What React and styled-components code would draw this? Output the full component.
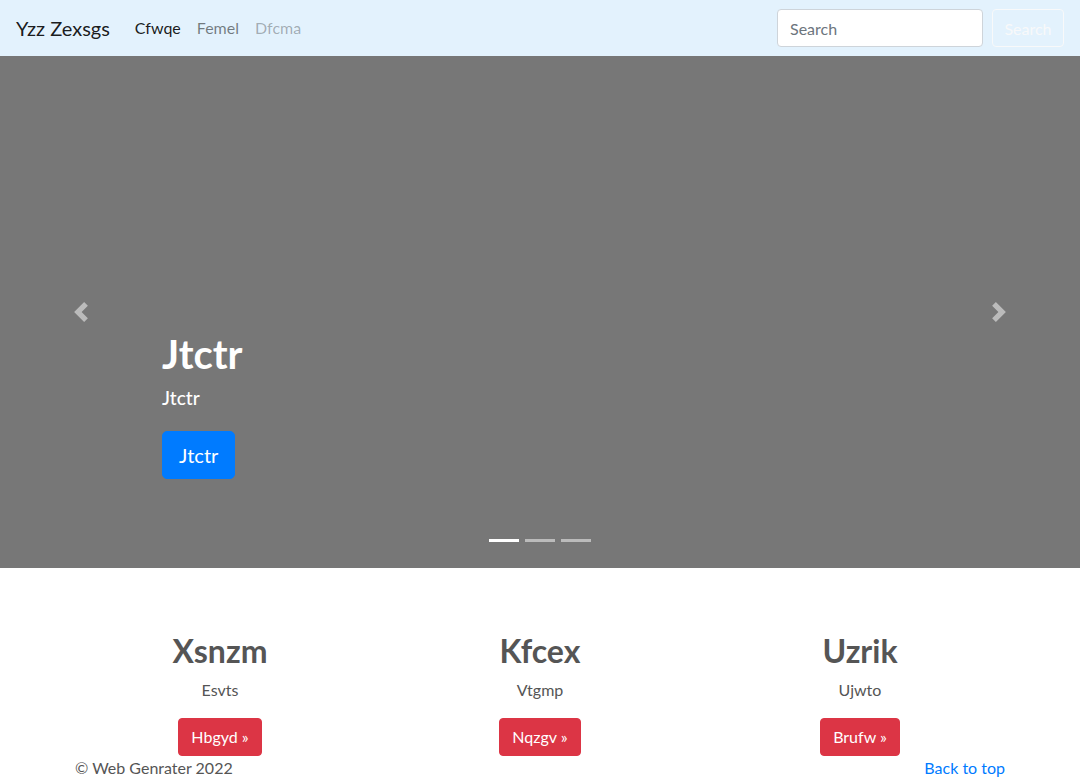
import React from 'react';
import styled, { createGlobalStyle } from 'styled-components';

const font = `"Lato", "Noto Sans", "Liberation Sans", sans-serif`;

const GlobalStyle = createGlobalStyle`
  * { box-sizing: border-box; }
  body {
    margin: 0;
    font-family: ${font};
    font-size: 16px;
    line-height: 1.5;
    color: #212529;
    background: #fff;
  }
`;

const Navbar = styled.nav`
  height: 56px;
  display: flex;
  align-items: center;
  padding: 8px 16px;
  background: #e3f2fd;
`;

const Brand = styled.a`
  font-size: 20px;
  line-height: 30px;
  color: rgba(0, 0, 0, 0.9);
  margin-right: 17px;
  text-decoration: none;
`;

const NavList = styled.ul`
  display: flex;
  list-style: none;
  margin: 0;
  padding: 0;
  flex: 1;
`;

const NavLink = styled.a`
  display: block;
  padding: 8px;
  text-decoration: none;
  color: ${p => (p.$active ? 'rgba(0,0,0,0.9)' : p.$disabled ? 'rgba(0,0,0,0.3)' : 'rgba(0,0,0,0.5)')};
`;

const SearchForm = styled.form`
  display: flex;
  align-items: center;
  gap: 9px;
`;

const SearchInput = styled.input`
  width: 206px;
  height: 38px;
  padding: 6px 12px;
  font-family: ${font};
  font-size: 16px;
  color: #495057;
  border: 1px solid #ced4da;
  border-radius: 4px;
  background: #fff;
  &::placeholder { color: #6c757d; }
`;

const OutlineButton = styled.button`
  width: 72px;
  height: 38px;
  font-family: ${font};
  font-size: 16px;
  color: #f8f9fa;
  background: transparent;
  border: 1px solid #f8f9fa;
  border-radius: 4px;
`;

const Carousel = styled.div`
  position: relative;
  height: 512px;
  background: #777;
  margin-bottom: 64px;
`;

const Control = styled.a`
  position: absolute;
  top: 0;
  bottom: 0;
  ${p => (p.$side === 'prev' ? 'left: 0;' : 'right: 0;')}
  width: 15%;
  display: flex;
  align-items: center;
  justify-content: center;
  opacity: 0.5;
`;

const Caption = styled.div`
  position: absolute;
  left: 15%;
  right: 15%;
  bottom: 89px;
  color: #fff;
`;

const CaptionTitle = styled.h1`
  margin: 0 0 5px;
  font-size: 40px;
  line-height: 48px;
  font-weight: 700;
`;

const CaptionText = styled.p`
  margin: 0 0 18px;
  font-size: 19px;
  line-height: 30px;
  font-weight: 500;
`;

const BigButton = styled.a`
  display: inline-block;
  padding: 8px 16px;
  font-size: 20px;
  line-height: 30px;
  color: #fff;
  background: #007bff;
  border: 1px solid #007bff;
  border-radius: 5px;
  text-decoration: none;
  vertical-align: top;
`;

const Indicators = styled.ol`
  position: absolute;
  left: 0;
  right: 0;
  bottom: 26px;
  display: flex;
  justify-content: center;
  gap: 6px;
  list-style: none;
  margin: 0;
  padding: 0;
`;

const Indicator = styled.li`
  width: 30px;
  height: 3px;
  background: #fff;
  opacity: ${p => (p.$active ? 1 : 0.5)};
`;

const Container = styled.div`
  width: 960px;
  margin: 0 auto;
  padding: 0 15px;
`;

const Row = styled.div`
  display: grid;
  grid-template-columns: repeat(3, 1fr);
  margin: 0 -15px;
`;

const Col = styled.div`
  padding: 0 15px;
  text-align: center;
`;

const ColTitle = styled.h2`
  margin: 0 0 8px;
  font-size: 32px;
  line-height: 38px;
  font-weight: 700;
  color: #555;
`;

const ColText = styled.p`
  margin: 0 0 16px;
  color: #555;
`;

const DangerButton = styled.a`
  display: inline-block;
  padding: 6px 12px;
  line-height: 24px;
  color: #fff;
  background: #dc3545;
  border: 1px solid #dc3545;
  border-radius: 4px;
  text-decoration: none;
`;

const Footer = styled.footer`
  display: flex;
  justify-content: space-between;
  padding: 0 0 16px;
  color: #555;
`;

const TopLink = styled.a`
  color: #007bff;
  text-decoration: none;
`;

const Chevron = ({ dir }) => (
  <svg width="20" height="20" viewBox="0 0 8 8" fill="#fff">
    {dir === 'prev' ? (
      <path d="M5.25 0l-4 4 4 4 1.5-1.5L4.25 4l2.5-2.5L5.25 0z" />
    ) : (
      <path d="M2.75 0l-1.5 1.5L3.75 4l-2.5 2.5L2.75 8l4-4-4-4z" />
    )}
  </svg>
);

const features = [
  { title: 'Xsnzm', text: 'Esvts', btn: 'Hbgyd' },
  { title: 'Kfcex', text: 'Vtgmp', btn: 'Nqzgv' },
  { title: 'Uzrik', text: 'Ujwto', btn: 'Brufw' },
];

export default function App() {
  return (
    <>
      <GlobalStyle />
      <Navbar>
        <Brand href="#">Yzz Zexsgs</Brand>
        <NavList>
          <li><NavLink href="#" $active>Cfwqe</NavLink></li>
          <li><NavLink href="#">Femel</NavLink></li>
          <li><NavLink href="#" $disabled>Dfcma</NavLink></li>
        </NavList>
        <SearchForm onSubmit={e => e.preventDefault()}>
          <SearchInput placeholder="Search" />
          <OutlineButton type="submit">Search</OutlineButton>
        </SearchForm>
      </Navbar>

      <Carousel>
        <Indicators>
          <Indicator $active />
          <Indicator />
          <Indicator />
        </Indicators>
        <Caption>
          <CaptionTitle>Jtctr</CaptionTitle>
          <CaptionText>Jtctr</CaptionText>
          <BigButton href="#">Jtctr</BigButton>
        </Caption>
        <Control $side="prev" href="#"><Chevron dir="prev" /></Control>
        <Control $side="next" href="#"><Chevron dir="next" /></Control>
      </Carousel>

      <Container>
        <Row>
          {features.map(f => (
            <Col key={f.title}>
              <ColTitle>{f.title}</ColTitle>
              <ColText>{f.text}</ColText>
              <DangerButton href="#">{f.btn} &raquo;</DangerButton>
            </Col>
          ))}
        </Row>
        <Footer>
          <span>&copy; Web Genrater 2022</span>
          <TopLink href="#">Back to top</TopLink>
        </Footer>
      </Container>
    </>
  );
}
